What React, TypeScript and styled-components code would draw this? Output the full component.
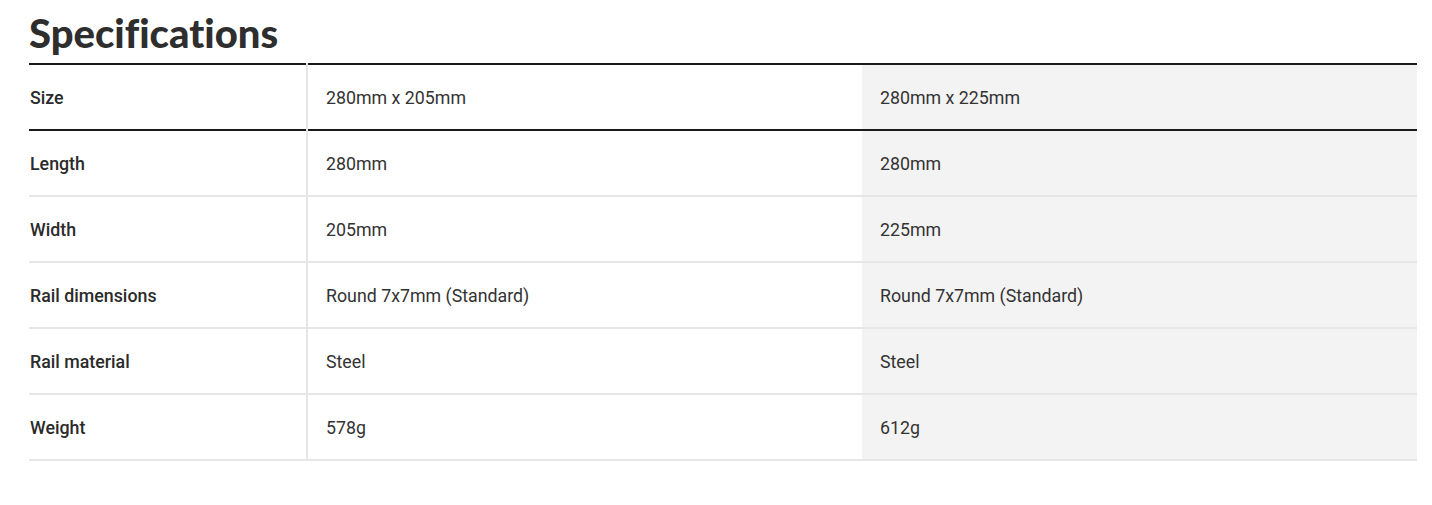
import React from "react";
import styled, { createGlobalStyle } from "styled-components";

const GlobalStyle = createGlobalStyle`
  body {
    margin: 0;
    background: #fff;
    font-family: Roboto, "Liberation Sans", sans-serif;
    color: #333;
  }
`;

const Section = styled.section`
  padding: 11px 15px 0 29px;
`;

const Heading = styled.h2`
  margin: 0 0 8px 0;
  font-family: Lato, "DejaVu Sans", sans-serif;
  font-weight: 900;
  font-size: 40px;
  line-height: 44px;
  color: #2e2e2e;
  font-variant-ligatures: none;
`;

const Table = styled.table`
  width: 100%;
  border-collapse: collapse;
  border-top: 2px solid #1a1a1a;
  table-layout: fixed;
`;

const Row = styled.tr<{ $head?: boolean }>`
  border-bottom: 2px solid ${(p) => (p.$head ? "#1a1a1a" : "#e6e6e6")};
`;

const Label = styled.th`
  width: 276px;
  height: 64px;
  padding: 0 0 0 1px;
  text-align: left;
  font-weight: 500;
  font-size: 17.8px;
  color: #2b2b2b;
  border-right: 2px solid #e6e6e6;
`;

const Cell = styled.td<{ $alt?: boolean }>`
  height: 64px;
  padding: 0 0 0 18px;
  font-size: 17.8px;
  color: #333;
  background: ${(p) => (p.$alt ? "#f3f3f3" : "transparent")};
`;

const specs: [string, string, string][] = [
  ["Size", "280mm x 205mm", "280mm x 225mm"],
  ["Length", "280mm", "280mm"],
  ["Width", "205mm", "225mm"],
  ["Rail dimensions", "Round 7x7mm (Standard)", "Round 7x7mm (Standard)"],
  ["Rail material", "Steel", "Steel"],
  ["Weight", "578g", "612g"],
];

export default function App() {
  return (
    <>
      <GlobalStyle />
      <Section>
        <Heading>Specifications</Heading>
        <Table>
          <tbody>
            {specs.map(([label, a, b], i) => (
              <Row key={label} $head={i === 0}>
                <Label>{label}</Label>
                <Cell>{a}</Cell>
                <Cell $alt>{b}</Cell>
              </Row>
            ))}
          </tbody>
        </Table>
      </Section>
    </>
  );
}
